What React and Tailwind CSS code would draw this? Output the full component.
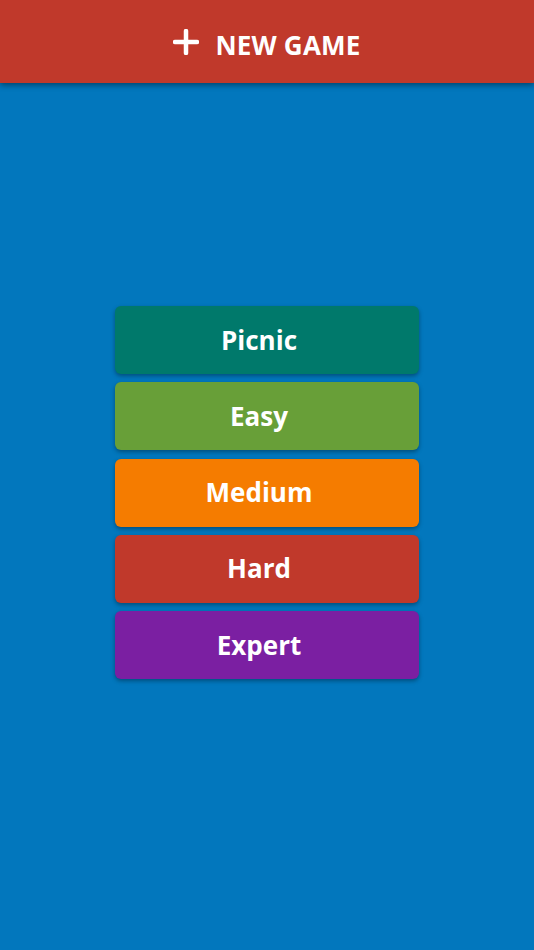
const levels = [
  { name: 'Picnic', color: 'bg-[#00796b]' },
  { name: 'Easy', color: 'bg-[#689f38]' },
  { name: 'Medium', color: 'bg-[#f57c00]' },
  { name: 'Hard', color: 'bg-[#c0392b]' },
  { name: 'Expert', color: 'bg-[#7b1fa2]' },
];

export default function App() {
  return (
    <div className="min-h-[950px] bg-[#0277bd] font-['Open_Sans',sans-serif] text-white">
      <header className="relative z-10 flex h-[83px] items-center justify-center gap-4 bg-[#c0392b] pt-2 shadow-[0_2px_6px_rgba(0,0,0,0.45)]">
        <svg width="26" height="26" viewBox="0 0 26 26" className="-mt-2">
          <path d="M13 2v22M2 13h22" stroke="white" strokeWidth="4.5" strokeLinecap="round" />
        </svg>
        <h1 className="text-[26px] font-bold tracking-[0.2px]">NEW GAME</h1>
      </header>

      <div className="flex flex-col items-center gap-[8.25px] pt-[223px]">
        {levels.map((l) => (
          <button
            key={l.name}
            className={`flex h-[68px] w-[304px] items-center justify-center rounded-md pr-4 text-[26px] font-bold shadow-[0_2px_4px_rgba(0,0,0,0.35)] ${l.color}`}
          >
            {l.name}
          </button>
        ))}
      </div>
    </div>
  );
}
